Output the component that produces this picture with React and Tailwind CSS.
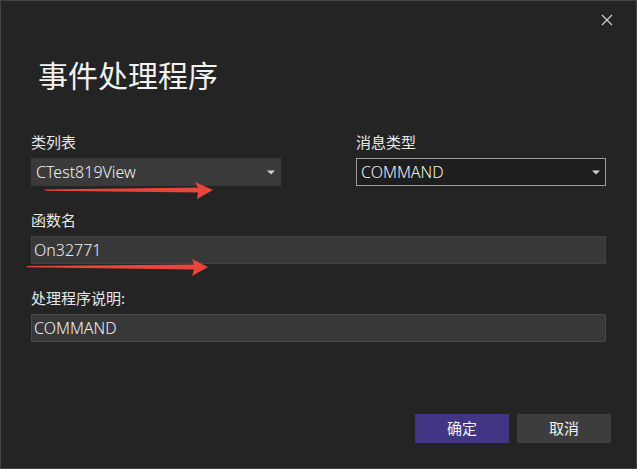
import React from 'react';

const font = { fontFamily: '"Noto Sans", "Noto Sans CJK SC", sans-serif' };

function Caret() {
  return (
    <svg width="8" height="5" viewBox="0 0 8 5" className="shrink-0">
      <path d="M0 0.5 L8 0.5 L4 4.5 Z" fill="#cfcfcf" />
    </svg>
  );
}

function Label({ children }) {
  return <div className="h-[20px] text-[15px] leading-[20px] text-[#e8e8e8]">{children}</div>;
}

export default function App() {
  return (
    <div
      className="relative w-[637px] h-[469px] bg-[#242424] border border-[#444444] text-[#f0f0f0] px-[30px] flex flex-col"
      style={font}
    >
      {/* close button */}
      <div className="flex justify-end pt-[13px] -mr-[7px]">
        <svg width="12" height="12" viewBox="0 0 12 12">
          <path d="M1 1 L11 11 M11 1 L1 11" stroke="#d0d0d0" strokeWidth="1.2" />
        </svg>
      </div>

      <h1 className="mt-[30px] h-[40px] text-[30px] leading-[40px] pl-[7px] text-[#f2f2f2]">事件处理程序</h1>

      <div className="mt-[36px] grid grid-cols-[250px_250px] justify-between">
        <div className="flex flex-col gap-[6px]">
          <Label>类列表</Label>
          <div className="h-[28px] bg-[#3a3a3a] flex items-center justify-between pl-[5px] pr-[6px]">
            <span className="text-[16px] font-light">CTest819View</span>
            <Caret />
          </div>
        </div>
        <div className="flex flex-col gap-[6px]">
          <Label>消息类型</Label>
          <div className="h-[28px] bg-[#1e1e1e] border border-[#9c9c9c] flex items-center justify-between pl-[4px] pr-[5px]">
            <span className="text-[16px] font-light">COMMAND</span>
            <Caret />
          </div>
        </div>
      </div>

      <div className="mt-[24px] flex flex-col gap-[6px]">
        <Label>函数名</Label>
        <div className="h-[28px] bg-[#383838] border border-[#424242] flex items-center pl-[2px]">
          <span className="text-[16px] font-light">On32771</span>
        </div>
      </div>

      <div className="mt-[24px] flex flex-col gap-[6px]">
        <Label>处理程序说明:</Label>
        <div className="h-[28px] bg-[#383838] border border-[#484848] flex items-center pl-[2px]">
          <span className="text-[16px] font-light">COMMAND</span>
        </div>
      </div>

      <div className="mt-[72px] flex justify-end gap-[8px] -mr-[5px]">
        <button className="w-[94px] h-[29px] bg-[#423584] text-[15px] text-[#f2f2f2]">确定</button>
        <button className="w-[94px] h-[29px] bg-[#3d3d3d] text-[15px] text-[#f2f2f2]">取消</button>
      </div>

      {/* red annotation arrows */}
      <svg className="absolute left-[-1px] top-[-1px] pointer-events-none" width="637" height="469">
        <polygon
          points="45,189.5 198,187.5 195,182 213,190 197,199 198,192.5 45,190.7"
          fill="#e8453b"
        />
        <polygon
          points="27,266 194,264.5 192,259 208,267 192,276 194,269.5 27,267.2"
          fill="#e8453b"
        />
      </svg>
    </div>
  );
}
